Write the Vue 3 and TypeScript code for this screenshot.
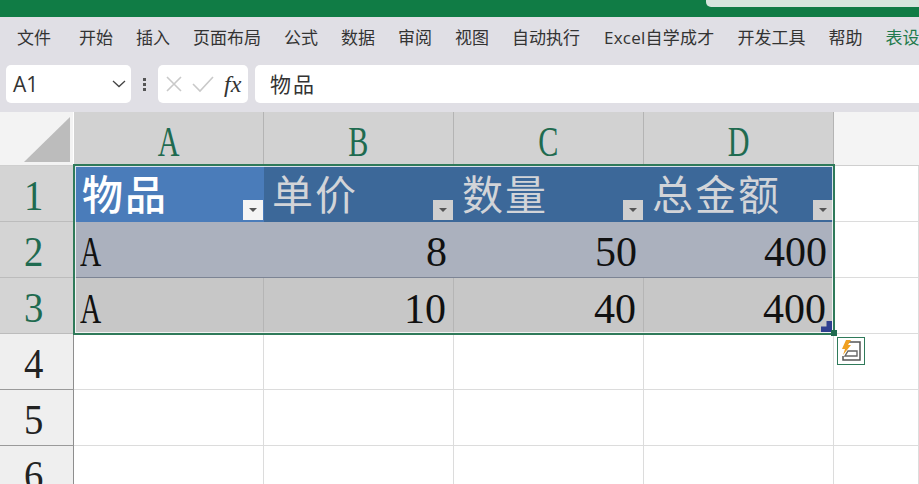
<script setup lang="ts">
const tabs: string[] = ['文件', '开始', '插入', '页面布局', '公式', '数据', '审阅', '视图', '自动执行', 'Excel自学成才', '开发工具', '帮助']
const cols: string[] = ['A', 'B', 'C', 'D']
const titles: string[] = ['物品', '单价', '数量', '总金额']
const rows: (string | number)[][] = [
  ['A', 8, 50, 400],
  ['A', 10, 40, 400],
]
const blanks: number[] = [4, 5, 6]
</script>

<template>
  <div class="app">
    <div class="titlebar"><div class="search"></div></div>
    <nav class="tabs">
      <span v-for="t in tabs" :key="t">{{ t }}</span>
      <span class="design">表设</span>
    </nav>
    <div class="formula">
      <div class="namebox">
        <span>A1</span>
        <svg width="14" height="8" viewBox="0 0 14 8"><path d="M1 1l6 5.5L13 1" fill="none" stroke="#444" stroke-width="1.3" /></svg>
      </div>
      <div class="dots"><i></i><i></i><i></i></div>
      <div class="actions">
        <svg width="18" height="18" viewBox="0 0 18 18"><path d="M2 2l14 14M16 2L2 16" fill="none" stroke="#c9c9c9" stroke-width="1.6" /></svg>
        <svg width="22" height="18" viewBox="0 0 22 18"><path d="M1 9l7 7L21 2" fill="none" stroke="#c9c9c9" stroke-width="1.6" /></svg>
        <span class="fx">fx</span>
      </div>
      <div class="input">物品</div>
    </div>
    <div class="sheet">
      <div class="corner">
        <svg width="46" height="45" viewBox="0 0 46 45"><path d="M46 0V45H0z" fill="#bcbcbc" /></svg>
      </div>
      <div v-for="c in cols" :key="c" class="colhead"><span class="narrow">{{ c }}</span></div>
      <div class="colrest"></div>

      <div class="rowhead sel green"><span class="digit">1</span></div>
      <div v-for="(t, i) in titles" :key="t" class="title" :class="{ active: i === 0 }">
        <span>{{ t }}</span>
        <div class="filter"><i></i></div>
      </div>
      <div class="blank"></div>

      <template v-for="(r, ri) in rows" :key="ri">
        <div class="rowhead sel green"><span class="digit">{{ ri + 2 }}</span></div>
        <div
          v-for="(v, ci) in r"
          :key="ci"
          class="cell"
          :class="[ri === 0 ? 'band' : 'plain', { num: typeof v === 'number' }]"
        >
          <span v-if="typeof v === 'string'" class="narrow left">{{ v }}</span>
          <template v-else>{{ v }}</template>
        </div>
        <div class="blank"></div>
      </template>

      <template v-for="n in blanks" :key="n">
        <div class="rowhead"><span class="digit">{{ n }}</span></div>
        <div v-for="c in cols" :key="c" class="blank"></div>
        <div class="blank"></div>
      </template>

      <div class="selection"></div>
      <div class="resize"></div>
      <div class="handle"></div>
      <div class="quick">
        <svg width="22" height="22" viewBox="0 0 22 22">
          <path d="M6 2h14v18H3v-4" fill="none" stroke="#555" stroke-width="1.5" />
          <path d="M8 11h9v5H5z" fill="#fff" stroke="#666" stroke-width="1.4" />
          <path d="M6 0h5L8 5h3L3 15l2-6H2z" fill="#f0a020" />
        </svg>
      </div>
    </div>
  </div>
</template>

<style>
html, body { margin: 0; background: #fff; }
</style>

<style scoped>
.app {
  width: 919px;
  height: 484px;
  overflow: hidden;
  display: flex;
  flex-direction: column;
  background: #e0dfe5;
  font-family: "Noto Sans CJK SC", "Noto Sans", sans-serif;
}
.titlebar {
  height: 17px;
  flex: none;
  background: #107c45;
  display: flex;
  justify-content: flex-end;
}
.search {
  width: 213px;
  height: 7px;
  background: #d6e6dd;
  border-bottom-left-radius: 5px;
}
.tabs {
  height: 48px;
  flex: none;
  display: flex;
  align-items: center;
  gap: 23px;
  padding-left: 17px;
  white-space: nowrap;
  overflow: hidden;
  font-family: "Open Sans", "Noto Sans CJK SC", sans-serif;
  font-size: 17px;
  color: #333;
  box-sizing: border-box;
  padding-bottom: 10px;
}
.tabs span:first-child { margin-right: 5px; }
.tabs span:nth-child(10) { margin-left: 1px; letter-spacing: 0.25px; }
.design { color: #1f7a4c; }
.formula {
  height: 38px;
  flex: none;
  display: flex;
  align-items: stretch;
  padding-left: 6px;
}
.namebox {
  width: 125px;
  box-sizing: border-box;
  background: #fff;
  border-radius: 5px;
  display: flex;
  align-items: center;
  justify-content: space-between;
  padding: 0 5px 0 7px;
  font: 21px "Open Sans", sans-serif;
  color: #333;
}
.dots {
  width: 27px;
  display: flex;
  flex-direction: column;
  align-items: center;
  justify-content: center;
  gap: 2px;
}
.dots i {
  width: 3px;
  height: 3px;
  background: #555;
}
.actions {
  width: 90px;
  background: #fff;
  border-radius: 5px;
  display: flex;
  align-items: center;
  gap: 9px;
  padding-left: 7px;
  box-sizing: border-box;
}
.fx {
  font: italic 24px "Liberation Serif", serif;
  color: #333;
  margin-left: 1px;
}
.input {
  flex: 1;
  margin-left: 7px;
  background: #fff;
  border-radius: 5px 0 0 5px;
  padding-left: 15px;
  font-size: 21px;
  letter-spacing: 2px;
  color: #333;
  line-height: 36px;
}
.sheet {
  position: relative;
  margin-top: 9px;
  flex: 1;
  display: grid;
  grid-template-columns: 74px repeat(4, 190px) 85px;
  grid-template-rows: 54px repeat(6, 56px);
  background: #fff;
  font-family: "Liberation Serif", serif;
  overflow: hidden;
}
.corner {
  background: #f3f3f3;
  border-right: 1px solid #fff;
  border-bottom: 1px solid #cfcfcf;
  box-sizing: border-box;
  display: flex;
  align-items: flex-end;
  justify-content: flex-end;
  padding: 0 3px 3px 0;
}
.colhead {
  background: #d2d2d2;
  border-right: 1px solid #b4b4b4;
  border-bottom: 1px solid #bbb;
  box-sizing: border-box;
  display: flex;
  align-items: center;
  justify-content: center;
  font-size: 43px;
  color: #1f6b50;
  padding-top: 6px;
}
.colrest {
  background: #f4f4f4;
  border-bottom: 1px solid #cfcfcf;
}
.narrow {
  display: inline-block;
  transform: scaleX(0.7);
}
.left { transform-origin: left center; }
.digit {
  display: inline-block;
  transform: scaleX(0.9);
}
.rowhead {
  background: #efefef;
  border-right: 1px solid #8e8e8e;
  border-bottom: 1px solid #9a9a9a;
  box-sizing: border-box;
  display: flex;
  align-items: center;
  justify-content: center;
  font-size: 43px;
  color: #222;
  line-height: 1;
  padding: 3px 5px 0 0;
}
.rowhead.sel { background: #d4d4d4; border-right-color: #d4d4d4; border-bottom-color: #bcbcbc; }
.rowhead.green { color: #1f6b50; }
.title {
  position: relative;
  background: #3c6899;
  display: flex;
  align-items: center;
  padding: 0 0 0 8px;
  font-family: "Noto Sans CJK SC", serif;
  font-size: 41px;
  letter-spacing: 2px;
  color: #d2d4d8;
  line-height: 1;
}
.title span { transform: translateY(-2px); white-space: nowrap; }
.title.active { background: #4a7cba; color: #fff; font-weight: 500; }
.filter {
  position: absolute;
  right: 1px;
  bottom: 2px;
  width: 20px;
  height: 20px;
  background: #cfcfcf;
  display: flex;
  align-items: center;
  justify-content: center;
}
.active .filter { background: #f4f4f4; }
.filter i {
  width: 0;
  height: 0;
  border-left: 4px solid transparent;
  border-right: 4px solid transparent;
  border-top: 4px solid #555;
}
.cell {
  box-sizing: border-box;
  display: flex;
  align-items: center;
  font-size: 42px;
  color: #111;
  padding: 5px 7px 0 6px;
  line-height: 1;
}
.cell.num { justify-content: flex-end; }
.band { background: #abb1be; border-bottom: 1px solid #7c8494; }
.plain { background: #c7c7c7; border-right: 1px solid #b5b5b5; }
.blank {
  background: #fff;
  border-right: 1px solid #dcdcdc;
  border-bottom: 1px solid #dcdcdc;
  box-sizing: border-box;
}
.selection {
  position: absolute;
  left: 73px;
  top: 52px;
  width: 762px;
  height: 171px;
  box-sizing: border-box;
  border: 2px solid #2f7a5a;
  outline: 1px solid rgba(255, 255, 255, 0.8);
  outline-offset: -3px;
}
.resize {
  position: absolute;
  left: 821px;
  top: 209px;
  width: 11px;
  height: 11px;
  background: #2f3f90;
  clip-path: polygon(100% 0, 100% 100%, 0 100%, 0 50%, 50% 50%, 50% 0);
}
.handle {
  position: absolute;
  left: 831px;
  top: 218px;
  width: 6px;
  height: 6px;
  box-sizing: border-box;
  background: #1f6b50;
}
.quick {
  position: absolute;
  left: 837px;
  top: 225px;
  width: 28px;
  height: 28px;
  box-sizing: border-box;
  border: 1px solid #2f7a5a;
  background: #fff;
  display: flex;
  align-items: center;
  justify-content: center;
}
</style>
